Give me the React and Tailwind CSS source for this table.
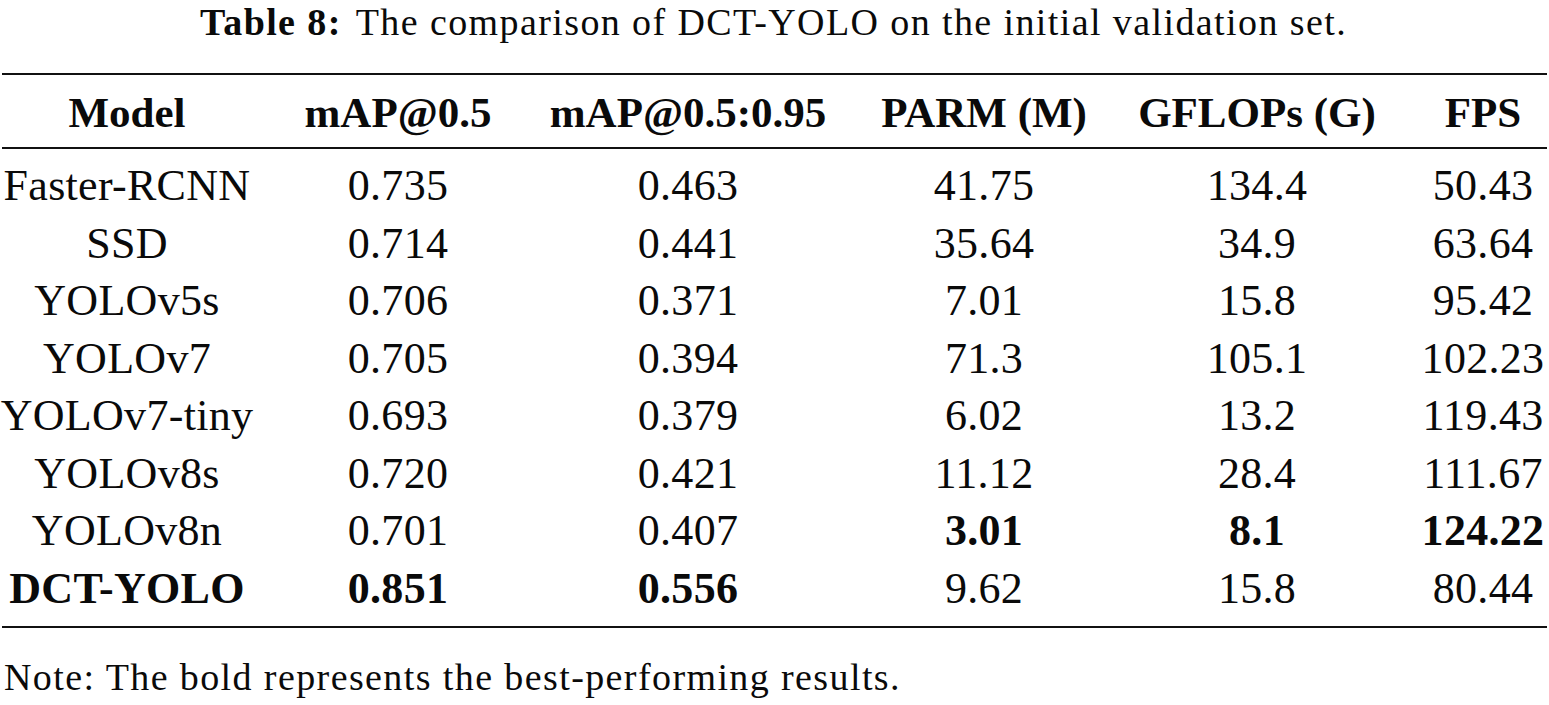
import React from 'react';

const rows = [
  ['Faster-RCNN', '0.735', '0.463', '41.75', '134.4', '50.43'],
  ['SSD', '0.714', '0.441', '35.64', '34.9', '63.64'],
  ['YOLOv5s', '0.706', '0.371', '7.01', '15.8', '95.42'],
  ['YOLOv7', '0.705', '0.394', '71.3', '105.1', '102.23'],
  ['YOLOv7-tiny', '0.693', '0.379', '6.02', '13.2', '119.43'],
  ['YOLOv8s', '0.720', '0.421', '11.12', '28.4', '111.67'],
  ['YOLOv8n', '0.701', '0.407', '3.01', '8.1', '124.22', [3, 4, 5]],
  ['DCT-YOLO', '0.851', '0.556', '9.62', '15.8', '80.44', [0, 1, 2]],
];

const headers = ['Model', 'mAP@0.5', 'mAP@0.5:0.95', 'PARM (M)', 'GFLOPs (G)', 'FPS'];

// fixed column tracks so each column centre lands where the reference has it
const grid = 'grid grid-cols-[254px_288px_292px_300px_284px_130px]';

function Cell({ i, bold, children }) {
  return (
    <div className={`text-center whitespace-nowrap ${i === 4 ? 'pr-[38px]' : ''} ${bold ? 'font-bold' : ''}`}>
      {children}
    </div>
  );
}

export default function App() {
  return (
    <div className="w-[1549px] h-[705px] overflow-hidden bg-white text-[#0a0a0a]"
      style={{ fontFamily: '"Liberation Serif", "Times New Roman", serif' }}>
      {/* caption */}
      <div className="text-center text-[38px] leading-[44px] tracking-[1.4px] pr-[2px]">
        <span className="font-bold">Table 8:</span>
        <span className="ml-[14px]">The comparison of DCT-YOLO on the initial validation set.</span>
      </div>

      <div className="mt-[29px] mx-[2px] h-[2px] bg-[#111]" />

      {/* header */}
      <div className={`${grid} h-[72px] items-center pt-[4px] text-[43px] font-bold`}>
        {headers.map((h, i) => <Cell key={h} i={i}>{h}</Cell>)}
      </div>

      <div className="mx-[2px] h-[2px] bg-[#111]" />

      {/* body */}
      <div className="pt-[8px] pb-[9px] text-[44px] tracking-[0.3px]">
        {rows.map(r => (
          <div key={r[0]} className={`${grid} h-[57.5px] leading-[57.5px]`}>
            {r.slice(0, 6).map((v, i) => (
              <Cell key={i} i={i} bold={r[6] && r[6].includes(i)}>{v}</Cell>
            ))}
          </div>
        ))}
      </div>

      <div className="mx-[2px] h-[2px] bg-[#111]" />

      <div className="mt-[27px] pl-[4px] text-[38px] leading-[44px] tracking-[1.4px]">
        Note: The bold represents the best-performing results.
      </div>
    </div>
  );
}
